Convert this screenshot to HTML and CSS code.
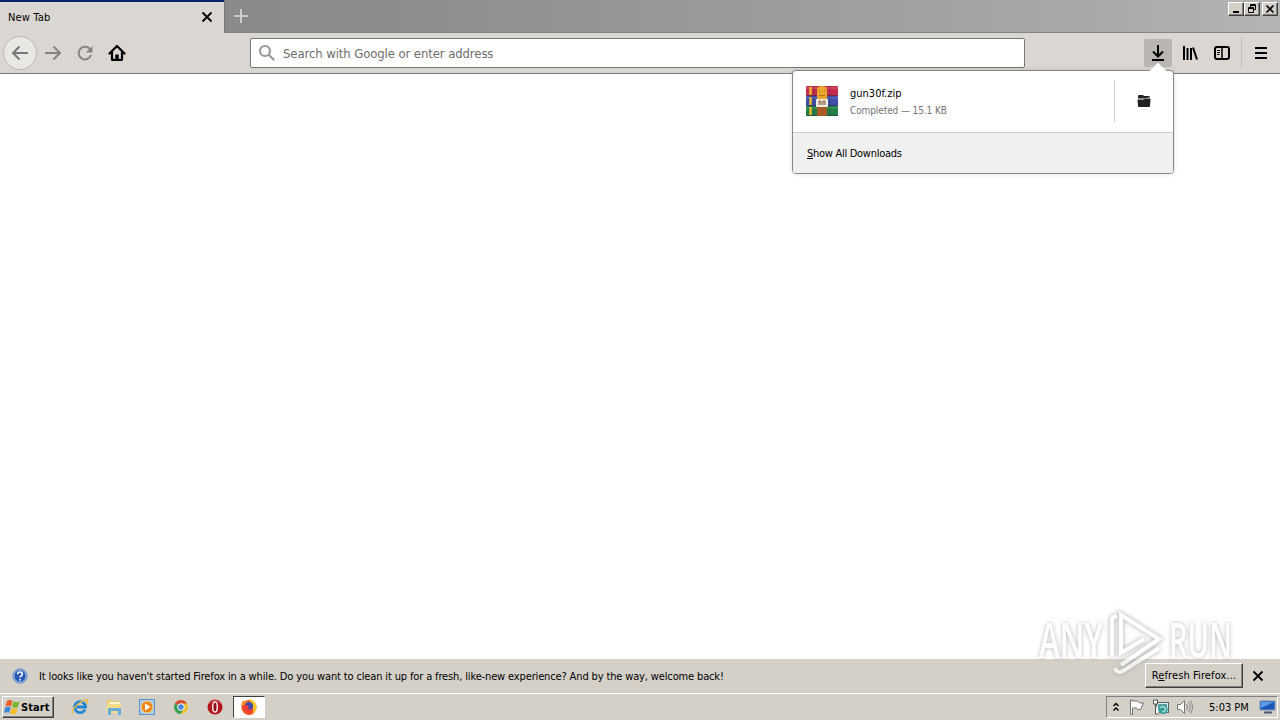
FILE: index.html
```html
<!DOCTYPE html>
<html lang="en">
<head>
    <meta charset="UTF-8">
    <meta name="viewport" content="width=device-width, initial-scale=1.0">
    <title>New Tab</title>
    <link rel="stylesheet" href="styles.css">
</head>
<body>
    <div class="tabbar">
        <div class="tab">
            <span class="tab-title">New Tab</span>
            <svg class="tab-close" width="12" height="12" viewBox="0 0 12 12"><path d="M1.5 1.5l9 9M10.5 1.5l-9 9"/></svg>
        </div>
        <div class="new-tab">
            <svg width="16" height="16" viewBox="0 0 16 16"><path d="M8 1v14M1 8h14"/></svg>
        </div>
        <div class="window-buttons">
            <span class="win-btn"><svg width="12" height="10" viewBox="0 0 12 10"><path d="M3 8h6" stroke-width="2"/></svg></span>
            <span class="win-btn"><svg width="12" height="10" viewBox="0 0 12 10"><path d="M4.5 3.5V.5h5v5h-2M4 1.5h6M2.5 3.5h5v5h-5zM2 4.5h6"/></svg></span>
            <span class="win-btn close"><svg width="12" height="10" viewBox="0 0 12 10"><path d="M2.5 1.5l7 7M9.5 1.5l-7 7" stroke-width="1.6"/></svg></span>
        </div>
    </div>

    <div class="toolbar">
        <div class="nav">
            <span class="nav-btn back"><svg width="18" height="18" viewBox="0 0 18 18"><path d="M17 9H2M8.5 2.5L2 9l6.5 6.5"/></svg></span>
            <span class="nav-btn"><svg width="18" height="18" viewBox="0 0 18 18"><path d="M1 9h15M9.5 2.5L16 9l-6.5 6.5"/></svg></span>
            <span class="nav-btn"><svg width="16" height="16" viewBox="0 0 16 16"><path d="M13.5 5A6.3 6.3 0 1 0 14 10"/><path d="M15.5 1v6.5H9z" fill="#868482" stroke="none"/></svg></span>
            <span class="nav-btn home"><svg width="18" height="18" viewBox="0 0 18 18"><path d="M1.5 9.5L9 2l7.5 7.500M4 8.5v7.3h10V8.5" stroke-linecap="round" stroke-linejoin="round"/><path d="M7.3 16v-5.5h3.4V16" fill="#000" stroke="none"/></svg></span>
        </div>
        <div class="urlbar">
            <svg width="18" height="18" viewBox="0 0 18 18"><circle cx="7" cy="7" r="5"/><path d="M10.8 10.8l5.4 5.4"/></svg>
            <span class="placeholder">Search with Google or enter address</span>
        </div>
        <div class="tools">
            <span class="tool active"><svg width="16" height="18" viewBox="0 0 16 18"><path d="M8 1v11M3 7.5l5 5 5-5M2 16h12"/></svg></span>
            <span class="tool"><svg width="16" height="16" viewBox="0 0 16 16"><path d="M2 1v14M5.5 3v12M9 3v12M11 2.5l4 12"/></svg></span>
            <span class="tool"><svg width="16" height="16" viewBox="0 0 16 16"><rect x="1" y="2" width="14" height="12" rx="2"/><path d="M8 2v12" stroke-width="1.5"/><path d="M3 5.5h3M3 7.5h3M3 9.5h2.5" stroke-width="1"/></svg></span>
            <span class="separator"></span>
            <span class="tool menu"><svg width="14" height="14" viewBox="0 0 14 14"><path d="M1 2h12M1 7h12M1 12h12"/></svg></span>
        </div>
        <div class="panel">
            <svg class="panel-arrow" width="20" height="10" viewBox="0 0 20 10"><path d="M0 9.5L1.5 9 9 1.5q1-1 2 0L18.5 9l1.5.5v.5H0z"/></svg>
            <div class="download">
                <svg class="archive" width="34" height="32" viewBox="0 0 34 32">
                    <rect x="1" y="1" width="32" height="10" rx="1" fill="#c32c4a"/>
                    <rect x="1" y="11" width="32" height="10" rx="1" fill="#3e4fa8"/>
                    <rect x="1" y="21" width="32" height="10" rx="1" fill="#238044"/>
                    <path d="M1 3h32" stroke="#d95870"/>
                    <path d="M1 13h32" stroke="#6674c4"/>
                    <path d="M1 23h32" stroke="#45a35e"/>
                    <path d="M1 10.5h32M1 20.5h32M1 30.5h32" stroke="#262042" stroke-opacity=".5"/>
                    <path d="M5.5 2v8M5.5 12v8M5.5 22v8" stroke="#e9b52b" stroke-width="2.5"/>
                    <path d="M9 1v30M25 1v30" stroke="#291b3b" stroke-opacity=".25"/>
                    <rect x="12" y="19" width="10" height="12" fill="#a85c24"/>
                    <path d="M12 14V5q0-4 5-4t5 4v9z" fill="#eba62d"/>
                    <path d="M14 6h1M19 6h1M14 10q3 2 6 0" stroke="#a96a1c" fill="none"/>
                    <rect x="11" y="14" width="12" height="8" rx="1" fill="#f4efe8"/>
                    <path d="M14 20v-4h2v4M18 20v-4h2v4" stroke="#8a4a25" fill="none"/>
                </svg>
                <div class="file">
                    <div class="file-name">gun30f.zip</div>
                    <div class="file-status">Completed — 15.1 KB</div>
                </div>
                <div class="open-folder">
                    <svg width="14" height="14" viewBox="0 0 14 14"><path d="M1 4.5V2.2Q1 1 2.2 1H6l1 1h4.8q1.2 0 1.2 1.3L7 4.5z"/><path d="M.5 5.5h6l1.500-1h5.500v1L13 12q-.1 1-1 1H2q-.9 0-1-1z"/></svg>
                </div>
            </div>
            <div class="show-all"><span><u>S</u>how All Downloads</span></div>
        </div>
    </div>

    <div class="content"></div>

    <div class="notification">
        <svg class="help" width="16" height="16" viewBox="0 0 16 16">
            <circle cx="8" cy="8" r="7.3" fill="#2459b5" stroke="#8ba5d2"/>
            <circle cx="8" cy="8" r="6.2" fill="none" stroke="#dbe6f6" stroke-width=".8"/>
            <path d="M5.7 6.2q0-2.2 2.3-2.2t2.3 2q0 1.2-1.3 1.900-1 .5-1 1.600M8 11v1.5" fill="none" stroke="#fff" stroke-width="1.7"/>
        </svg>
        <span class="message">It looks like you haven't started Firefox in a while. Do you want to clean it up for a fresh, like-new experience? And by the way, welcome back!</span>
        <button class="refresh"><span>R<u>e</u>fresh Firefox...</span></button>
        <svg class="dismiss" width="12" height="12" viewBox="0 0 12 12"><path d="M1.5 1.5l9 9M10.5 1.5l-9 9"/></svg>
    </div>

    <div class="taskbar">
        <button class="start">
            <svg width="17" height="16" viewBox="0 0 17 16">
                <path d="M3 2q3-2 5.5 0L7 7.5Q4.5 6 1.5 7.5z" fill="#e8602c"/>
                <path d="M9.5 2.5q3 1.5 6 0L14 8q-3 1.5-6 0z" fill="#7cb52e"/>
                <path d="M1.2 8.5q3-1.5 5.5 0L5.2 14Q3 12.5 0 14z" fill="#3d87d8"/>
                <path d="M7.7 9q3 1.5 6 0l-1.5 5.5q-3 1.5-6 0z" fill="#f5bd26"/>
            </svg>
            <span>Start</span>
        </button>
        <div class="quick-launch">
            <span class="task"><svg width="18" height="18" viewBox="0 0 18 18">
                <path d="M14 11.5A5.5 5.5 0 1 1 14.5 9H5" fill="none" stroke="#2387d5" stroke-width="2.8"/>
                <path d="M2 16Q-1 14 5 8T16 2q2 1-1 4" fill="none" stroke="#e8bb3d" stroke-width="1.4"/>
            </svg></span>
            <span class="task"><svg width="18" height="18" viewBox="0 0 18 18">
                <path d="M2 2h5l1 1h7v11H2z" fill="#e9cc6c"/>
                <path d="M4 4h11v4H4z" fill="#fbf4ce"/>
                <path d="M2 6h14v9H2z" fill="#f3dc87"/>
                <path d="M3 17v-6q0-1 1-1h11q1 0 1 1v6h-3v-4H6v4z" fill="#68add9"/>
            </svg></span>
            <span class="task"><svg width="18" height="18" viewBox="0 0 18 18">
                <rect x="1.5" y="1.5" width="15" height="15" fill="#a8cdec" stroke="#5c94c6"/>
                <circle cx="9" cy="9" r="6" fill="#ef8717" stroke="#f8d39d"/>
                <path d="M7 5.5L12.5 9 7 12.5z" fill="#fff"/>
            </svg></span>
            <span class="task"><svg width="18" height="18" viewBox="0 0 18 18">
                <circle cx="9" cy="9" r="7" fill="#f2c230"/>
                <path d="M9 9L2.9 5.5A7 7 0 0 1 15.1 5.5H9z" fill="#d94a38"/>
                <path d="M9 9L2.9 5.5A7 7 0 0 0 8.5 16L12 10.5z" fill="#3ba05a"/>
                <circle cx="9" cy="9" r="3.3" fill="#4b86df" stroke="#fff"/>
            </svg></span>
            <span class="task"><svg width="18" height="18" viewBox="0 0 18 18">
                <circle cx="9" cy="9" r="7.5" fill="#b3141c"/>
                <path d="M3 6a7 7 0 0 1 12 0" fill="none" stroke="#dc5960"/>
                <ellipse cx="9" cy="9" rx="2.3" ry="5" fill="#8b0d15" stroke="#f5e2e2" stroke-width="1.6"/>
            </svg></span>
            <span class="task running"><svg width="18" height="18" viewBox="0 0 18 18">
                <circle cx="9" cy="9.5" r="7.5" fill="#f4501f"/>
                <path d="M9 1q8 2 7.5 9-.5 4-4 6 2-5-1-8z" fill="#ffca2c"/>
                <path d="M1.5 8q0-4 2-6l1 2q3-1 4 0L7 6z" fill="#fa8a20"/>
                <circle cx="9" cy="8" r="4" fill="#3f4dae"/>
                <path d="M3 8q3-2 6 0-2 3 1 3.5 2 0 3-1-1 4-5 4-4-1-5-6.5z" fill="#f03c34"/>
            </svg></span>
        </div>
        <div class="tray">
            <svg class="chevrons" width="8" height="11" viewBox="0 0 8 11"><path d="M1.5 4L4 1.5 6.5 4M1.5 8.5L4 6l2.5 2.5"/></svg>
            <svg class="flag" width="18" height="16" viewBox="0 0 18 16"><path d="M2.5 1v14.5h2V9h4l1 1.5h3L15.5 4h-4L9.5 2h-5V1z" fill="#fff" stroke="#737373"/></svg>
            <svg class="network" width="18" height="16" viewBox="0 0 18 16">
                <rect x="4.5" y="3.5" width="12" height="10" fill="#e1eef0" stroke="#4d696c"/>
                <rect x="6" y="5" width="9" height="6" fill="#639caa"/>
                <path d="M1.5 1h4v4h-4zM3.5 5v10H7" fill="#fff" stroke="#555"/>
                <circle cx="11" cy="10.5" r="4.7" fill="#329e98"/>
                <path d="M8 9q3-3 5 0t-3 4" fill="none" stroke="#a9dccc" stroke-width="1.5"/>
            </svg>
            <svg class="volume" width="18" height="16" viewBox="0 0 18 16"><path d="M1.5 5.5h3l4-4v13l-4-4h-3z" fill="#fff" stroke="#777"/><path d="M10.5 5q2 3 0 6M12.5 3q3.5 5 0 10M14.5 1.5q4 6.5 0 13" fill="none" stroke="#888"/></svg>
            <span class="clock">5:03 PM</span>
            <svg class="desktop" width="17" height="14" viewBox="0 0 17 14"><path d="M1 1h15v9H1z" fill="#1c58b5" stroke="#7894bf"/><path d="M2 2h13L2 8z" fill="#5e9be6"/><path d="M5 12.5h8" stroke="#4a566c" stroke-width="2"/></svg>
        </div>
    </div>

    <svg class="watermark" width="210" height="70" viewBox="0 0 210 70">
        <text x="2" y="50" textLength="64" lengthAdjust="spacingAndGlyphs">ANY</text>
        <text x="132" y="50" textLength="63" lengthAdjust="spacingAndGlyphs">RUN</text>
        <g class="mark-shadow"><path d="M75 49V12q0-3 5-4M84 45V7l38 24-38 26M84 17v28l23-14M78 60q2 6 8 3l36-23"/></g>
        <g class="mark"><path d="M75 49V12q0-3 5-4M84 45V7l38 24-38 26M84 17v28l23-14M78 60q2 6 8 3l36-23"/></g>
    </svg>
</body>
</html>
```
FILE: styles.css
```css
* {
    box-sizing: border-box;
}

body {
    display: flex;
    flex-direction: column;
    width: 1280px;
    height: 720px;
    margin: 0;
    overflow: hidden;
    position: relative;
    background: #fff;
    color: #000;
    font-family: "DejaVu Sans Condensed", "DejaVu Sans", sans-serif;
    font-size: 11px;
    white-space: nowrap;
}

svg {
    display: block;
    flex: none;
    fill: none;
    stroke: #000;
}

.tabbar {
    display: flex;
    height: 33px;
    background: linear-gradient(90deg, #858585, #8c8c8c 30%, #a8a8a8 85%, #b4b4b4);
    border-bottom: 1px solid #858585;
}

.tab {
    display: flex;
    align-items: center;
    justify-content: space-between;
    width: 224px;
    height: 33px;
    padding: 0 11px 2px 8px;
    background: #dad6d2;
    border-top: 2px solid #0a246a;
}

.tab-title {
    padding-top: 1px;
    letter-spacing: 0.15px;
}

.tab-close,
.dismiss {
    stroke-width: 1.8;
}

.new-tab {
    display: flex;
    align-items: center;
    justify-content: center;
    width: 33px;
    border-left: 1px solid #777;
}

.new-tab svg {
    stroke: #dedede;
    stroke-width: 1.6;
}

.window-buttons {
    display: flex;
    margin: 2px 2px 0 auto;
}

.win-btn {
    display: flex;
    align-items: center;
    justify-content: center;
    width: 16px;
    height: 14px;
    background: #d4d0c8;
    border: 1px solid;
    border-color: #fff #404040 #404040 #fff;
    box-shadow: inset -1px -1px #808080;
}

.close {
    margin-left: 2px;
}

.toolbar {
    display: flex;
    align-items: center;
    position: relative;
    height: 41px;
    background: #dad6d2;
    border-bottom: 1px solid #777;
}

.nav {
    display: flex;
    align-items: center;
    width: 250px;
    padding-left: 3px;
}

.nav-btn {
    display: flex;
    align-items: center;
    justify-content: center;
    width: 32px;
    height: 32px;
}

.nav-btn svg {
    stroke: #868482;
    stroke-width: 2;
}

.back {
    width: 34px;
    height: 34px;
    border: 1px solid #bcb8b4;
    border-radius: 50%;
    background: #e9e7e4;
}

.back svg {
    stroke: #777;
}

.home svg {
    stroke: #000;
    stroke-width: 2.2;
}

.urlbar {
    display: flex;
    align-items: center;
    width: 775px;
    height: 30px;
    padding-left: 7px;
    background: #fff;
    border: 1px solid #777;
    border-radius: 2px;
}

.urlbar svg {
    stroke: #999;
    stroke-width: 2.2;
}

.placeholder {
    margin-left: 7px;
    color: #6d6d6d;
    font-size: 13px;
    letter-spacing: -0.1px;
}

.tools {
    display: flex;
    align-items: center;
    gap: 4px;
    margin-left: 119px;
}

.tool {
    display: flex;
    align-items: center;
    justify-content: center;
    width: 28px;
    height: 28px;
}

.tool svg {
    stroke-width: 2;
}

.active {
    background: #b9b6b2;
    border-radius: 2px;
}

.separator {
    width: 1px;
    height: 32px;
    margin-left: 1px;
    background: #c5c1bc;
}

.menu {
    margin-left: 1px;
}

.panel {
    position: absolute;
    top: 37px;
    left: 792px;
    z-index: 1;
    width: 382px;
    height: 104px;
    background: #fff;
    border: 1px solid #888;
    border-radius: 4px;
    box-shadow: 0 0 4px rgba(0, 0, 0, 0.15);
}

.panel-arrow {
    position: absolute;
    top: -9px;
    left: 355px;
    fill: #fff;
    stroke: none;
}

.download {
    display: flex;
    align-items: center;
    height: 61px;
    padding: 0 0 1px 12px;
}

.archive {
    stroke: none;
}

.file {
    width: 264px;
    padding-top: 2px;
    margin-left: 11px;
}

.file-name {
    line-height: 17px;
}

.file-status {
    color: #737373;
    font-size: 10px;
    letter-spacing: -0.1px;
    line-height: 17px;
}

.open-folder {
    display: flex;
    align-items: center;
    justify-content: center;
    width: 59px;
    height: 42px;
    border-left: 1px solid #d0d0d0;
}

.open-folder svg {
    fill: #202020;
    stroke: none;
}

.show-all {
    display: flex;
    align-items: center;
    height: 41px;
    padding-left: 14px;
    background: #f0f0f0;
    border-top: 1px solid #ccc;
    border-radius: 0 0 3px 3px;
    letter-spacing: -0.28px;
}

.content {
    flex: 1;
}

.notification {
    display: flex;
    align-items: center;
    height: 34px;
    padding: 0 16px 0 12px;
    background: #d4d0c8;
}

.help {
    stroke: none;
}

.message {
    margin-left: 11px;
    letter-spacing: -0.14px;
}

button {
    padding: 0;
    background: #d4d0c8;
    border: 1px solid;
    border-color: #fff #404040 #404040 #fff;
    border-radius: 0;
    box-shadow: inset -1px -1px #808080;
    color: #000;
    font-family: inherit;
    font-size: 11px;
}

.refresh {
    width: 98px;
    height: 25px;
    margin: 0 0 2px auto;
    letter-spacing: 0.1px;
}

.dismiss {
    margin-left: 9px;
}

.taskbar {
    display: flex;
    align-items: center;
    height: 27px;
    padding-left: 2px;
    background: #d4d0c8;
    border-top: 1px solid #fff;
}

.start {
    display: flex;
    align-items: center;
    width: 52px;
    height: 22px;
    padding-left: 1px;
    font-weight: bold;
    letter-spacing: 0.1px;
}

.start svg {
    stroke: none;
}

.quick-launch {
    display: flex;
    align-items: center;
    margin-left: 9px;
}

.task {
    display: flex;
    align-items: center;
    justify-content: center;
    width: 33.7px;
    height: 22px;
}

.task svg {
    stroke: none;
}

.running {
    width: 32px;
    margin-left: 2px;
    background: #fff;
    border: 1px solid;
    border-color: #404040 #fff #fff #404040;
}

.tray {
    display: flex;
    align-items: center;
    width: 172px;
    height: 22px;
    margin: 0 2px 0 auto;
    padding-left: 5px;
    border: 1px solid;
    border-color: #808080 #fff #fff #808080;
}

.tray svg {
    stroke: none;
}

.tray .chevrons {
    stroke: #000;
    stroke-width: 1.4;
}

.flag {
    margin-left: 8px;
}

.network {
    margin-left: 6px;
}

.volume {
    margin-left: 6px;
}

.clock {
    margin-left: 15px;
}

.tray .desktop {
    margin-left: 10px;
}

.watermark {
    position: absolute;
    top: 608px;
    left: 1037px;
    z-index: 2;
    overflow: visible;
    stroke: none;
    opacity: 0.7;
}

.watermark text {
    fill: #fff;
    font-family: "Open Sans", sans-serif;
    font-size: 48px;
    font-weight: 600;
    filter: drop-shadow(0 0 2px #999);
}

.mark-shadow {
    stroke: #aaa;
    stroke-width: 6;
    filter: blur(2px);
}

.mark {
    stroke: #fff;
    stroke-width: 4;
}
```
